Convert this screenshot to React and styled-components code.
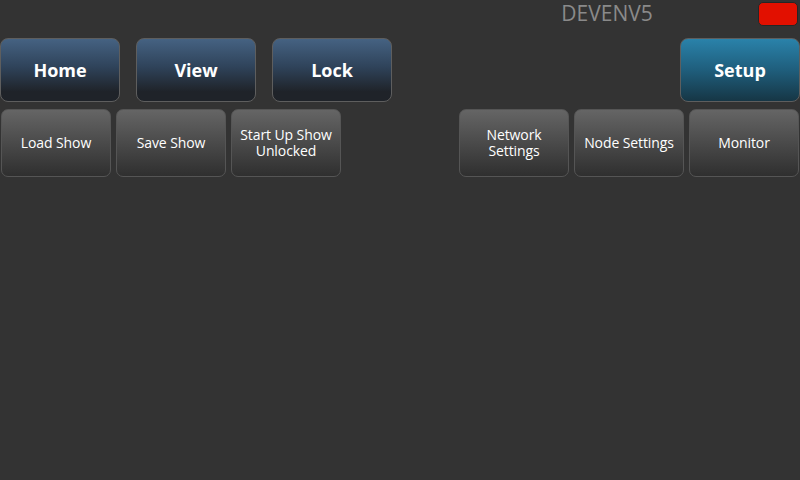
import React from "react"
import styled, { createGlobalStyle } from 'styled-components'

const GlobalStyle = createGlobalStyle`
  html, body {
    margin: 0;
    padding: 0;
    background: #333333;
    font-family: "Open Sans", "Liberation Sans", sans-serif;
  }
`

const Screen = styled.div`
  width: 800px;
  height: 480px;
  background: #333333;
  display: flex;
  flex-direction: column;
  overflow: hidden;
`

const Header = styled.div`
  height: 38px;
  display: flex;
  justify-content: flex-end;
  align-items: flex-start;
`

const Title = styled.div`
  width: 200px;
  margin-right: 51px;
  text-align: center;
  color: #8a8a8a;
  font-size: 21px;
  line-height: 26px;
  font-weight: 400;
`

const StatusLight = styled.div`
  width: 38px;
  height: 22px;
  margin-top: 2px;
  margin-right: 2px;
  background: #e21000;
  border: 1px solid #262626;
  border-radius: 5px;
`

const Row = styled.div`
  display: flex;
  justify-content: space-between;
  padding: 0 ${p => p.$pad || 0}px;
  margin-bottom: ${p => p.$below || 0}px;
`

const Group = styled.div`
  display: flex;
  gap: ${p => p.$gap}px;
`

const NavButton = styled.button`
  width: 120px;
  height: 64px;
  box-sizing: border-box;
  border: 1px solid #5e5e5e;
  border-radius: 8px;
  background: ${p => p.$active
    ? 'linear-gradient(to bottom, #2a82aa 0%, #1f5e7c 50%, #163645 100%)'
    : 'linear-gradient(to bottom, #456282 0%, #2f435a 45%, #1f2329 85%, #1f2329 100%)'};
  color: #ffffff;
  font-family: "Open Sans", "Liberation Sans", sans-serif;
  font-size: 18px;
  font-weight: 700;
  padding: 0;
  cursor: pointer;
`

const ToolButton = styled.button`
  width: 110px;
  height: 68px;
  box-sizing: border-box;
  border: 1px solid #555555;
  border-radius: 7px;
  background: linear-gradient(to bottom, #656565 0%, #4a4a4a 50%, #2f2f2f 100%);
  color: #ffffff;
  font-family: "Open Sans", "Liberation Sans", sans-serif;
  font-size: 14px;
  line-height: 16px;
  letter-spacing: -0.1px;
  padding: 0 3px;
  cursor: pointer;
`

const leftTools = ['Load Show', 'Save Show', 'Start Up Show Unlocked']
const rightTools = ['Network Settings', 'Node Settings', 'Monitor']

function App() {
  return (
    <Screen>
      <GlobalStyle />
      <Header>
        <Title>DEVENV5</Title>
        <StatusLight />
      </Header>
      <Row $below={7}>
        <Group $gap={16}>
          <NavButton>Home</NavButton>
          <NavButton>View</NavButton>
          <NavButton>Lock</NavButton>
        </Group>
        <NavButton $active>Setup</NavButton>
      </Row>
      <Row $pad={1}>
        <Group $gap={5}>
          {leftTools.map(t => <ToolButton key={t}>{t}</ToolButton>)}
        </Group>
        <Group $gap={5}>
          {rightTools.map(t => <ToolButton key={t}>{t}</ToolButton>)}
        </Group>
      </Row>
    </Screen>
  )
}

export default App
